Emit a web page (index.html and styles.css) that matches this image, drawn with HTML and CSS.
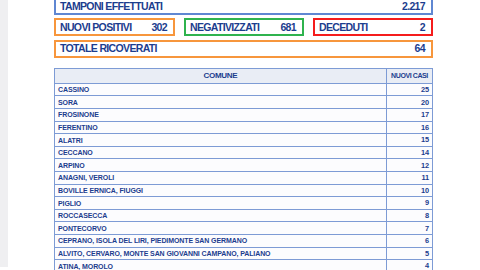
FILE: index.html
```html
<!DOCTYPE html>
<html lang="it">
<head>
<meta charset="utf-8">
<title>Dati COVID Frosinone</title>
<link rel="stylesheet" href="styles.css">
</head>
<body>
<div class="page">
  <div class="content">
    <div class="box blue"><span>TAMPONI EFFETTUATI</span><span>2.217</span></div>
    <div class="trio">
      <div class="box orange"><span>NUOVI POSITIVI</span><span>302</span></div>
      <div class="box green"><span>NEGATIVIZZATI</span><span>681</span></div>
      <div class="box red"><span>DECEDUTI</span><span>2</span></div>
    </div>
    <div class="box orange"><span>TOTALE RICOVERATI</span><span>64</span></div>

    <table class="casi">
      <thead>
        <tr><th class="comune">COMUNE</th><th class="nuovi">NUOVI CASI</th></tr>
      </thead>
      <tbody>
        <tr><td>CASSINO</td><td class="num">25</td></tr>
        <tr><td>SORA</td><td class="num">20</td></tr>
        <tr><td>FROSINONE</td><td class="num">17</td></tr>
        <tr><td>FERENTINO</td><td class="num">16</td></tr>
        <tr><td>ALATRI</td><td class="num">15</td></tr>
        <tr><td>CECCANO</td><td class="num">14</td></tr>
        <tr><td>ARPINO</td><td class="num">12</td></tr>
        <tr><td>ANAGNI, VEROLI</td><td class="num">11</td></tr>
        <tr><td>BOVILLE ERNICA, FIUGGI</td><td class="num">10</td></tr>
        <tr><td>PIGLIO</td><td class="num">9</td></tr>
        <tr><td>ROCCASECCA</td><td class="num">8</td></tr>
        <tr><td>PONTECORVO</td><td class="num">7</td></tr>
        <tr><td>CEPRANO, ISOLA DEL LIRI, PIEDIMONTE SAN GERMANO</td><td class="num">6</td></tr>
        <tr><td>ALVITO, CERVARO, MONTE SAN GIOVANNI CAMPANO, PALIANO</td><td class="num">5</td></tr>
        <tr><td>ATINA, MOROLO</td><td class="num">4</td></tr>
      </tbody>
    </table>
  </div>
</div>
</body>
</html>
```
FILE: styles.css
```css
html, body {
  margin: 0;
  padding: 0;
  background: #ffffff;
}
body {
  width: 480px;
  height: 270px;
  overflow: hidden;
  font-family: "Liberation Sans", Arial, sans-serif;
  font-weight: bold;
  color: #1c3d8e;
}
.page {
  height: 270px;
  border-left: 8px solid #efeff1;
  box-sizing: border-box;
}
.content {
  width: 379px;
  margin-left: 46px;
  margin-top: -3px;
  display: flex;
  flex-direction: column;
  gap: 3.3px;
}
.box {
  height: 18px;
  box-sizing: border-box;
  border: 2px solid;
  display: flex;
  align-items: center;
  justify-content: space-between;
  padding: 0 6px 0 4px;
  font-size: 10.5px;
  letter-spacing: -0.65px;
  line-height: 1;
}
.blue { border-color: #5f87d2; }
.orange { border-color: #f7963c; }
.green { border-color: #2fb34e; }
.red { border-color: #f51c1c; }
.trio {
  display: grid;
  grid-template-columns: 121px 120px 120px;
  column-gap: 9px;
}
.casi {
  margin-top: 7px;
  width: 379px;
  border-collapse: collapse;
  border: 1px solid #7d9bd5;
  font-size: 7px;
  letter-spacing: -0.1px;
  line-height: 1;
}
.casi th, .casi td {
  border: 1px solid #7d9bd5;
  padding: 0 3px;
}
.casi thead tr {
  height: 15px;
  background: #e9edf5;
}
.casi th {
  font-size: 8px;
  letter-spacing: -0.3px;
}
.casi th.nuovi {
  width: 41px;
  font-size: 7px;
  letter-spacing: -0.4px;
  padding: 0 2px;
}
.casi tbody tr {
  height: 12.6px;
  background: #fcfcfe;
}
.casi td.num {
  text-align: right;
  font-size: 7.4px;
}
```
